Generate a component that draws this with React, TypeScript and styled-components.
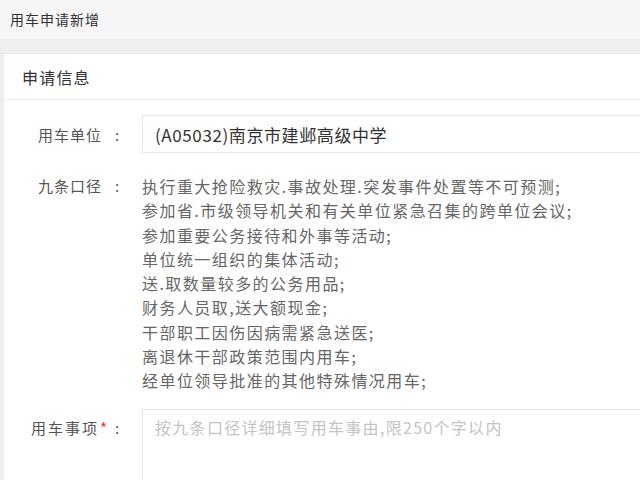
import React from "react";
import styled, { createGlobalStyle } from "styled-components";

const Global = createGlobalStyle`
  html, body { margin: 0; padding: 0; background: #eeeeee; overflow: hidden; }
  body { font-family: "Noto Sans CJK SC", "Noto Sans", sans-serif; }
`;

const Page = styled.div`
  width: 1000px;
  min-height: 480px;
  background: #eeeeee;
  display: flex;
  flex-direction: column;
`;

const TopBar = styled.div`
  height: 37px;
  background: #f6f6f6;
  border-bottom: 1px solid #f9f9f9;
  display: flex;
  align-items: center;
  padding-left: 10px;
  padding-bottom: 1px;
  font-size: 14px;
  letter-spacing: 1px;
  color: #333;
`;

const Band = styled.div`
  height: 14px;
  background: #efefef;
  border-bottom: 1px solid #e8e8e8;
`;

const Card = styled.div`
  margin-left: 4px;
  background: #ffffff;
  flex: 1;
  display: flex;
  flex-direction: column;
`;

const CardHeader = styled.div`
  height: 45px;
  border-bottom: 1px solid #eeeeee;
  display: flex;
  align-items: center;
  padding-left: 18px;
  font-size: 16px;
  letter-spacing: 1.2px;
  color: #333;
`;

const Form = styled.div`
  padding-top: 15px;
  display: flex;
  flex-direction: column;
`;

const Row = styled.div<{ $gap: number; $align?: string }>`
  display: flex;
  align-items: ${(p) => p.$align || "flex-start"};
  margin-bottom: ${(p) => p.$gap}px;
`;

const Label = styled.div<{ $top?: number; $shift?: number; $spacing?: number }>`
  width: 122px;
  flex: none;
  display: flex;
  justify-content: flex-end;
  font-size: 15px;
  letter-spacing: ${(p) => p.$spacing ?? 1}px;
  color: #555;
  padding-top: ${(p) => p.$top || 0}px;
  margin-right: 16px;
  padding-right: ${(p) => p.$shift || 0}px;
  white-space: nowrap;
`;

const Colon = styled.span<{ $near?: boolean }>`
  display: inline-block;
  width: 18px;
  margin-left: ${(p) => (p.$near ? 1 : 6)}px;
  text-align: center;
  letter-spacing: 0;
`;

const Star = styled.span`
  color: #e33;
  letter-spacing: 0;
  margin-left: 1px;
`;

const InputBox = styled.div`
  flex: 1;
  height: 36px;
  border: 1px solid #e6e6e6;
  display: flex;
  align-items: center;
  padding-left: 12px;
  font-size: 17px;
  letter-spacing: 0.6px;
  color: #333;
`;

const Criteria = styled.div`
  font-size: 16px;
  letter-spacing: 1.45px;
  line-height: 24.3px;
  color: #666;
`;

const TextArea = styled.div`
  flex: 1;
  height: 120px;
  border: 1px solid #e6e6e6;
  padding: 7px 12px;
  font-size: 16px;
  line-height: 20px;
  letter-spacing: 1.3px;
  color: #c4c4c4;
`;

const lines = [
  "执行重大抢险救灾.事故处理.突发事件处置等不可预测;",
  "参加省.市级领导机关和有关单位紧急召集的跨单位会议;",
  "参加重要公务接待和外事等活动;",
  "单位统一组织的集体活动;",
  "送.取数量较多的公务用品;",
  "财务人员取,送大额现金;",
  "干部职工因伤因病需紧急送医;",
  "离退休干部政策范围内用车;",
  "经单位领导批准的其他特殊情况用车;",
];

export default function App() {
  return (
    <>
      <Global />
      <Page>
        <TopBar>用车申请新增</TopBar>
        <Band />
        <Card>
          <CardHeader>申请信息</CardHeader>
          <Form>
            <Row $gap={21} $align="center">
              <Label>
                用车单位<Colon>:</Colon>
              </Label>
              <InputBox>(A05032)南京市建邺高级中学</InputBox>
            </Row>
            <Row $gap={16}>
              <Label $top={1} $shift={-2}>
                九条口径<Colon>:</Colon>
              </Label>
              <Criteria>
                {lines.map((l) => (
                  <div key={l}>{l}</div>
                ))}
              </Criteria>
            </Row>
            <Row $gap={0}>
              <Label $top={8} $shift={-3} $spacing={2}>
                用车事项<Star>*</Star>
                <Colon $near>:</Colon>
              </Label>
              <TextArea>按九条口径详细填写用车事由,限250个字以内</TextArea>
            </Row>
          </Form>
        </Card>
      </Page>
    </>
  );
}
